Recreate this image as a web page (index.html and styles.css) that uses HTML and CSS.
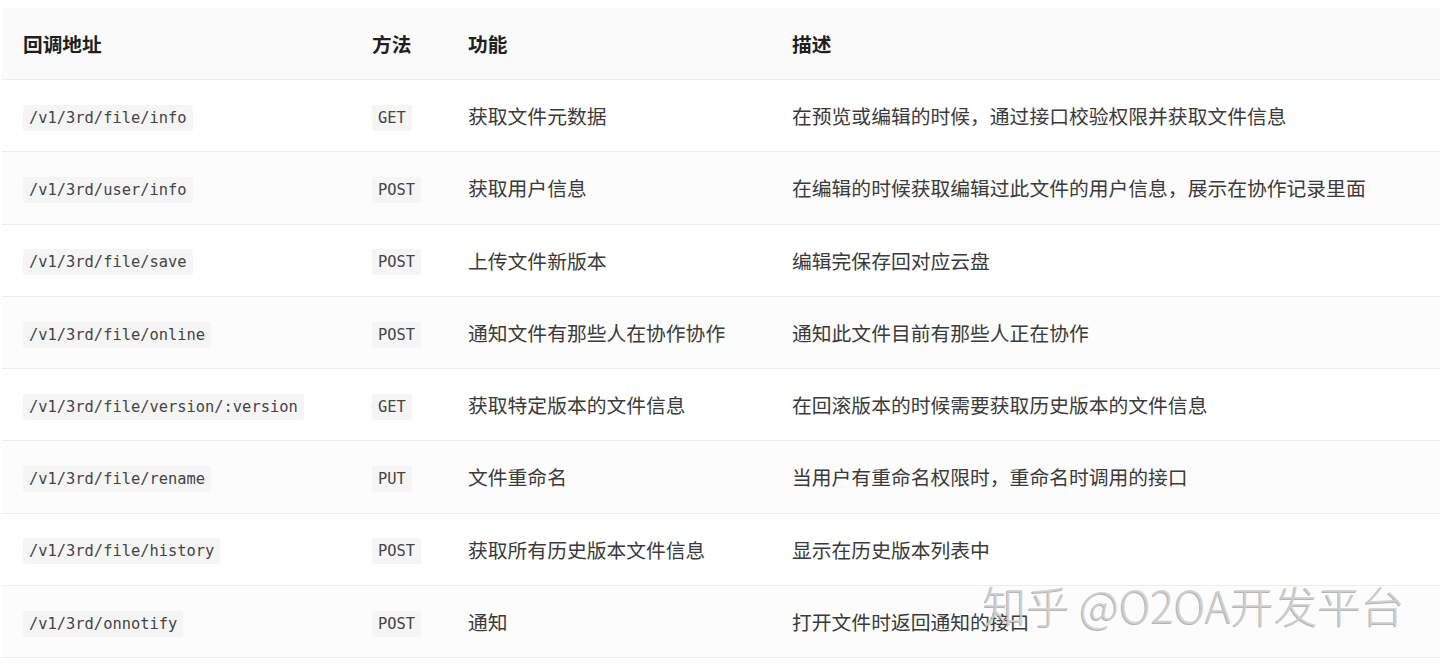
FILE: index.html
```html
<!DOCTYPE html>
<html lang="zh-CN">
<head>
<meta charset="utf-8">
<title>回调地址</title>
<link rel="stylesheet" href="styles.css">
</head>
<body>
<div class="page">
  <table class="api">
    <colgroup>
      <col class="c-path">
      <col class="c-method">
      <col class="c-func">
      <col class="c-desc">
    </colgroup>
    <thead>
      <tr><th>回调地址</th><th>方法</th><th>功能</th><th>描述</th></tr>
    </thead>
    <tbody>
      <tr><td><code>/v1/3rd/file/info</code></td><td><code>GET</code></td><td>获取文件元数据</td><td>在预览或编辑的时候，通过接口校验权限并获取文件信息</td></tr>
      <tr><td><code>/v1/3rd/user/info</code></td><td><code>POST</code></td><td>获取用户信息</td><td>在编辑的时候获取编辑过此文件的用户信息，展示在协作记录里面</td></tr>
      <tr><td><code>/v1/3rd/file/save</code></td><td><code>POST</code></td><td>上传文件新版本</td><td>编辑完保存回对应云盘</td></tr>
      <tr><td><code>/v1/3rd/file/online</code></td><td><code>POST</code></td><td>通知文件有那些人在协作协作</td><td>通知此文件目前有那些人正在协作</td></tr>
      <tr><td><code>/v1/3rd/file/version/:version</code></td><td><code>GET</code></td><td>获取特定版本的文件信息</td><td>在回滚版本的时候需要获取历史版本的文件信息</td></tr>
      <tr><td><code>/v1/3rd/file/rename</code></td><td><code>PUT</code></td><td>文件重命名</td><td>当用户有重命名权限时，重命名时调用的接口</td></tr>
      <tr><td><code>/v1/3rd/file/history</code></td><td><code>POST</code></td><td>获取所有历史版本文件信息</td><td>显示在历史版本列表中</td></tr>
      <tr><td><code>/v1/3rd/onnotify</code></td><td><code>POST</code></td><td>通知</td><td>打开文件时返回通知的接口</td></tr>
    </tbody>
  </table>
  <div class="watermark">知乎 @O2OA开发平台</div>
</div>
</body>
</html>
```

FILE: styles.css
```css
html, body {
  margin: 0;
  padding: 0;
  background: #ffffff;
}

.page {
  position: relative;
  padding: 8px 0 0 2px;
  width: 1438px;
  height: 657px;
  overflow: hidden;
  font-family: "Noto Sans CJK SC", "Noto Sans", sans-serif;
  color: #3a3a3a;
}

.api {
  border-collapse: collapse;
  table-layout: fixed;
  width: 1438px;
}

.c-path { width: 349px; }
.c-method { width: 96px; }
.c-func { width: 324px; }

.api th,
.api td {
  padding: 0 0 0 21px;
  text-align: left;
  vertical-align: middle;
  white-space: nowrap;
  border-bottom: 1px solid #ececec;
}

.api th {
  height: 71px;
  font-size: 19.7px;
  font-weight: 700;
  color: #1f1f1f;
  background: #fafafa;
}

.api td {
  height: 71.25px;
  font-size: 19.8px;
  font-weight: 400;
}

.api tbody tr:nth-child(even) td {
  background: #fcfcfc;
}

.api code {
  display: inline-block;
  font-family: "DejaVu Sans Mono", "Liberation Mono", monospace;
  font-size: 15.4px;
  line-height: 26px;
  padding: 0 6px;
  color: #444444;
  background: #f5f5f5;
  border-radius: 2px;
  vertical-align: middle;
}

.watermark {
  position: absolute;
  left: 983px;
  top: 573px;
  font-family: "Noto Sans CJK SC", "Noto Sans", sans-serif;
  font-size: 43.5px;
  font-weight: 300;
  color: rgba(208, 208, 208, 0.9);
  text-shadow: -1px 1px 0 rgba(120, 120, 120, 0.55);
  white-space: nowrap;
  pointer-events: none;
}
```
